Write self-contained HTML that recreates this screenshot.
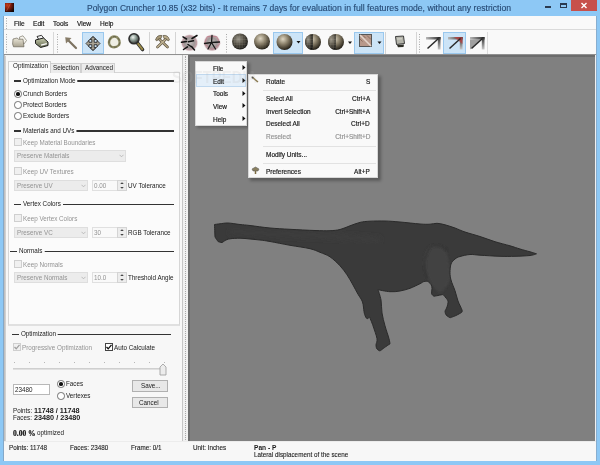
<!DOCTYPE html>
<html><head><meta charset="utf-8">
<style>
*{margin:0;padding:0;box-sizing:border-box}
html,body{width:600px;height:465px;overflow:hidden;background:#8dc8f5;font-family:"Liberation Sans",sans-serif;}
.a{position:absolute;white-space:nowrap;line-height:1}
.ti{top:3px;font-size:8.7px;color:#254872;line-height:normal;transform-origin:0 0;-webkit-text-stroke:0.12px currentColor}
#client{left:4px;top:16px;width:592px;height:445px;background:#f0f0f0;}
#menubar{left:4px;top:16px;width:592px;height:14px;background:#f9f9f9;border-bottom:1px solid #dadada}
#toolbar{left:4px;top:30px;width:592px;height:25px;background:#f9f9f9;border-bottom:1px solid #909090}
.mi{font-size:6.6px;color:#1a1a1a;line-height:normal;transform:scaleX(0.995);transform-origin:0 0;-webkit-text-stroke:0.18px currentColor}
#view{left:188px;top:55px;width:407px;height:386px;background:#808080;border-left:2px solid #6e6e6e;border-top:2px solid #6c6c6c}
#panel{left:4px;top:55px;width:179px;height:386px;background:#f2f2f2;border-right:1px solid #c6c6c6;border-left:1px solid #c0c0c0}
#status{left:4px;top:441px;width:592px;height:20px;background:#f7f7f7;border-top:1px solid #ececec}
.t{color:#1a1a1a}
.g{color:#939393}
.s{-webkit-text-stroke:0.12px currentColor;color:#222}
.m{-webkit-text-stroke:0.18px currentColor}
</style></head><body>
<div class="a" style="left:5px;top:3px;width:9px;height:9px;background:radial-gradient(circle at 25% 25%,#c83c18 0%,#7a1c0c 40%,#1a0806 80%,#05060a 100%)"></div><svg class="a" style="left:5px;top:3px" width="9" height="9"><path d="M5.5 0.5 L1.5 8" stroke="#ff9070" stroke-width="0.6" opacity="0.5"/></svg>
<div class="a ti" style="left:87px;transform:scaleX(0.974)">Polygon Cruncher 10.85 (x32 bits) - It remains 7 days for</div>
<div class="a ti" style="left:302px;transform:scaleX(1.005)">evaluation in full features</div>
<div class="a ti" style="left:401.2px;transform:scaleX(0.995)">mode, without any restriction</div>
<div class="a" style="left:545px;top:6px;width:6px;height:2px;background:#2a3a50"></div>
<div class="a" style="left:560px;top:3px;width:7px;height:5px;border:1px solid #2a3a50;border-top-width:2px"></div>
<div class="a" style="left:571px;top:0;width:26px;height:11px;background:#c7504b"></div>
<svg class="a" style="left:580px;top:2px" width="8" height="7" viewBox="0 0 8 7"><path d="M1.5 1 L6.5 6 M6.5 1 L1.5 6" stroke="#fff" stroke-width="1.4"/></svg>
<div class="a" id="client"></div>
<div class="a" style="left:3px;top:16px;width:1px;height:445px;background:#84a8c8"></div>
<div class="a" style="left:596px;top:16px;width:1px;height:445px;background:#88aed0"></div>
<div class="a" id="menubar"></div>
<div class="a mi" style="left:14px;top:20px">File</div>
<div class="a mi" style="left:33px;top:20px">Edit</div>
<div class="a mi" style="left:53px;top:20px">Tools</div>
<div class="a mi" style="left:77px;top:20px">View</div>
<div class="a mi" style="left:100px;top:20px">Help</div>
<div class="a" id="toolbar"></div>
<!-- toolbar -->
<svg class="a" style="left:0;top:0" width="600" height="60" viewBox="0 0 600 60">
<defs>
<radialGradient id="sph" cx="0.4" cy="0.32" r="0.72"><stop offset="0" stop-color="#ded6c2"/><stop offset="0.45" stop-color="#8a806a"/><stop offset="0.85" stop-color="#3a3428"/><stop offset="1" stop-color="#16140f"/></radialGradient>
<radialGradient id="sphd" cx="0.4" cy="0.35" r="0.7"><stop offset="0" stop-color="#9a968a"/><stop offset="0.5" stop-color="#4e4a40"/><stop offset="1" stop-color="#121210"/></radialGradient>
<pattern id="grid" width="2.6" height="2.6" patternUnits="userSpaceOnUse"><path d="M0 0 H2.6 M0 0 V2.6" stroke="#b8b0a0" stroke-width="0.5" opacity="0.55"/></pattern>
<linearGradient id="arwT" x1="0" y1="0" x2="1" y2="0"><stop offset="0" stop-color="#b8b8b8"/><stop offset="1" stop-color="#2a2a2a"/></linearGradient>
<linearGradient id="arwR" x1="0" y1="0" x2="0" y2="1"><stop offset="0" stop-color="#2a2a2a"/><stop offset="1" stop-color="#c8c8c8"/></linearGradient>
<radialGradient id="starbg" cx="0.5" cy="0.5" r="0.5"><stop offset="0" stop-color="#c8c2c2"/><stop offset="0.55" stop-color="#a09898"/><stop offset="0.82" stop-color="#c0a0a6"/><stop offset="1" stop-color="#f0e8ea" stop-opacity="0.2"/></radialGradient>
<linearGradient id="fold" x1="0" y1="0" x2="0" y2="1"><stop offset="0" stop-color="#ece8da"/><stop offset="1" stop-color="#a8a290"/></linearGradient>
<linearGradient id="prn" x1="0" y1="0" x2="0" y2="1"><stop offset="0" stop-color="#c8ccb0"/><stop offset="1" stop-color="#60664c"/></linearGradient>
<radialGradient id="lens" cx="0.4" cy="0.35" r="0.6"><stop offset="0" stop-color="#f0f4f0"/><stop offset="0.5" stop-color="#90a098"/><stop offset="1" stop-color="#404440"/></radialGradient>
</defs>
<!-- grips & separators -->
<line x1="6.5" y1="18" x2="6.5" y2="29" stroke="#a8a8a8" stroke-dasharray="1 1.5"/>
<line x1="6.5" y1="34" x2="6.5" y2="53" stroke="#a8a8a8" stroke-dasharray="1 1.5"/>
<line x1="53.5" y1="32" x2="53.5" y2="54" stroke="#d8d8d8"/>
<line x1="57.5" y1="34" x2="57.5" y2="53" stroke="#a8a8a8" stroke-dasharray="1 1.5"/>
<line x1="149.5" y1="32" x2="149.5" y2="54" stroke="#d4d4d4"/>
<line x1="175.5" y1="32" x2="175.5" y2="54" stroke="#d4d4d4"/>
<line x1="226.5" y1="34" x2="226.5" y2="53" stroke="#a8a8a8" stroke-dasharray="1 1.5"/>
<line x1="385.5" y1="32" x2="385.5" y2="54" stroke="#d4d4d4"/>
<line x1="416.5" y1="32" x2="416.5" y2="54" stroke="#d4d4d4"/>
<line x1="419.5" y1="34" x2="419.5" y2="53" stroke="#a8a8a8" stroke-dasharray="1 1.5"/>
<line x1="487.5" y1="32" x2="487.5" y2="54" stroke="#dcdcdc"/>
<!-- highlighted buttons -->
<rect x="82.5" y="32.5" width="21" height="21" fill="#cce4f7" stroke="#9ac8ee"/>
<rect x="273.5" y="32.5" width="29" height="21" fill="#cce4f7" stroke="#9ac8ee"/>
<rect x="354.5" y="32.5" width="29" height="21" fill="#cce4f7" stroke="#9ac8ee"/>
<rect x="443.5" y="32.5" width="22" height="21" fill="#cce4f7" stroke="#9ac8ee"/>
<!-- folder -->
<path d="M19.5 37 L23 35.8 L26.5 40.5 L24 44 L20 42 Z" fill="#f6f4ee" stroke="#6c6858" stroke-width="0.6"/>
<path d="M13 39 L17 38 L18.5 39.2 L23 39.2 L24 46.8 L13.5 46.8 L12.6 44 Z" fill="url(#fold)" stroke="#5a5648" stroke-width="0.6"/>
<!-- printer -->
<path d="M37 36.5 L41.5 35.3 L44 38.5 L39 39.8 Z" fill="#f4f4f4" stroke="#222" stroke-width="0.9"/>
<path d="M35.5 40 L43.5 38 L48 42 L48 45.5 L40.5 47.5 L35.5 43.5 Z" fill="url(#prn)" stroke="#1e1e1e" stroke-width="1"/>
<path d="M41 45.2 L46.8 43.6" stroke="#fafafa" stroke-width="1.4"/>
<!-- arrow -->
<path d="M67.5 39.5 L76 48" stroke="#7c7260" stroke-width="2.2" stroke-linecap="round"/>
<path d="M65.2 37.2 L71.5 38 L66 43.5 Z" fill="#877c68"/>
<!-- move (4-way) -->
<path d="M93 36.5 L96 39.5 L94.2 39.5 L94.2 42.3 L97 42.3 L97 40.5 L100 43.5 L97 46.5 L97 44.7 L94.2 44.7 L94.2 47.5 L96 47.5 L93 50.5 L90 47.5 L91.8 47.5 L91.8 44.7 L89 44.7 L89 46.5 L86 43.5 L89 40.5 L89 42.3 L91.8 42.3 L91.8 39.5 L90 39.5 Z" fill="#aaa494" stroke="#2e2e2e" stroke-width="0.9" stroke-linejoin="round"/>
<path d="M88 41 L93 36.5 L98 41 M88 46 L93 50.5 L98 46" fill="none" stroke="#3a3a3a" stroke-width="0.8"/>
<!-- rotate ring -->
<path d="M109.5 40 Q112 35 117 37.2 Q121 40.5 119 45 Q115.5 48.5 111 46.5 Q108 44 109.5 40 Z" fill="#eeeee4" stroke="#8c8a64" stroke-width="2.4"/>
<path d="M109.5 40 Q112 35 117 37.2 Q121 40.5 119 45 Q115.5 48.5 111 46.5 Q108 44 109.5 40 Z" fill="none" stroke="#4c4a38" stroke-width="0.6" stroke-dasharray="3 2"/>
<!-- magnifier -->
<path d="M137.5 43 L142.5 49.5" stroke="#2c2c2c" stroke-width="3.6" stroke-linecap="round"/>
<path d="M137.8 43.4 L142.2 49.1" stroke="#9a8a48" stroke-width="2" stroke-linecap="round"/>
<circle cx="134" cy="38.8" r="5" fill="url(#lens)" stroke="#2e2e2e" stroke-width="1.6"/>
<!-- hammer -->
<path d="M158 38 L167.5 47" stroke="#5a4e3c" stroke-width="2.6" stroke-linecap="round"/>
<path d="M167 38 L157.5 47" stroke="#5a4e3c" stroke-width="2.6" stroke-linecap="round"/>
<path d="M158 38 L167.5 47" stroke="#b4a888" stroke-width="1.4" stroke-linecap="round"/>
<path d="M167 38 L157.5 47" stroke="#c4b898" stroke-width="1.4" stroke-linecap="round"/>
<path d="M155.5 40 Q157 34.5 162 35.5 L161 38.5 Q158 38 157 41 Z" fill="#a89a78" stroke="#4c4436" stroke-width="0.6"/>
<path d="M169.5 40 Q168 34.5 163 35.5 L164 38.5 Q167 38 168 41 Z" fill="#b8aa88" stroke="#4c4436" stroke-width="0.6"/>
<!-- star blobs -->
<circle cx="189.5" cy="42.8" r="8.8" fill="url(#starbg)"/>
<path d="M183 36.8 L186.5 39 M192 38.5 L197 35.5 M181.5 42.3 L186.5 41.6 M188.5 41.8 L193.5 40.8 M188 44.5 L191 46.5 M183.5 49.5 L187.5 46.8 M191.5 46.5 L194.5 50" stroke="#111" stroke-width="1.5" stroke-linecap="round"/>
<circle cx="212" cy="42.8" r="8.8" fill="url(#starbg)"/>
<path d="M207 36.5 L217 36.5 L220 44 L212 49.5 L204.5 44 Z" fill="none" stroke="#c07080" stroke-width="0.7" opacity="0.7"/>
<path d="M212 35.5 L211.5 42.5 M204.5 43.5 L211.5 42.5 L219.5 42 M211.5 42.5 L208 49 M211.5 42.5 L215.5 49" stroke="#1a1a1a" stroke-width="1.3" fill="none" stroke-linecap="round"/>
<!-- spheres -->
<circle cx="240" cy="41.5" r="8" fill="url(#sphd)"/>
<circle cx="240" cy="41.5" r="7.6" fill="url(#grid)"/>
<circle cx="262" cy="41.5" r="8" fill="url(#sph)"/><circle cx="262" cy="41.5" r="7.6" fill="url(#grid)" opacity="0.35"/>
<circle cx="284.5" cy="42" r="8" fill="url(#sph)"/>
<path d="M296.5 41 H300.5 L298.5 43.5 Z" fill="#111"/>
<circle cx="313" cy="42" r="8" fill="url(#sph)"/>
<path d="M313 34 A8 8 0 0 0 313 50 Z" fill="url(#sphd)"/>
<path d="M313 34 A8 8 0 0 0 313 50 Z" fill="url(#grid)"/>
<circle cx="336" cy="42" r="8" fill="url(#sph)"/>
<path d="M336 34 A8 8 0 0 0 336 50 Z" fill="url(#sphd)" opacity="0.8"/>
<path d="M336 34 A8 8 0 0 0 336 50 Z" fill="url(#grid)"/>
<path d="M348 41.5 H352 L350 44 Z" fill="#111"/>
<!-- square -->
<rect x="359.5" y="34.5" width="12" height="12" fill="#b8988a" stroke="#4a4a4a" stroke-width="0.9"/>
<path d="M360 35 L371 46" stroke="#e4d4ca" stroke-width="1.6"/>
<path d="M363 35.5 L365.5 38 M367 35.5 L371 39.5 M360 39 L362.5 41.5" stroke="#6c5040" stroke-width="0.6"/>
<path d="M377.5 41.5 H381.5 L379.5 44 Z" fill="#111"/>
<!-- small icon -->
<path d="M395.5 36.5 L403.5 36 L404.5 43.5 L396.5 44.5 Z" fill="#b4b4aa" stroke="#2a2a2a" stroke-width="0.9"/>
<path d="M397 45 L404 44.5 L403.5 47 L398 47.2 Z" fill="#2e2e26"/>
<path d="M397 39 L402 38.8" stroke="#e0e0d8" stroke-width="0.8"/>
<!-- corner arrows -->
<g transform="translate(425,36)"><path d="M1 1 H15.5 V3.5 H1 Z" fill="url(#arwT)"/><path d="M12.8 1 H15.5 V13.5 H12.8 Z" fill="url(#arwR)"/><path d="M13.5 2.5 L2.5 12.5" stroke="#2a2a2a" stroke-width="1.5"/></g>
<g transform="translate(447,36)"><path d="M1 1 H15.5 V3.5 H1 Z" fill="url(#arwT)"/><path d="M12.8 1 H15.5 V13.5 H12.8 Z" fill="url(#arwR)"/><path d="M7 1 H15.5 V8 Z" fill="#c04040" opacity="0.7"/><path d="M13.5 2.5 L2.5 12.5" stroke="#2a2a2a" stroke-width="1.5"/></g>
<g transform="translate(469,36)"><path d="M1 3.5 H12.8 L1 13.5 Z" fill="#a0a0a0"/><path d="M1 1 H15.5 V3.5 H1 Z" fill="url(#arwT)"/><path d="M12.8 1 H15.5 V13.5 H12.8 Z" fill="url(#arwR)"/><path d="M13.5 2.5 L2.5 12.5" stroke="#2a2a2a" stroke-width="1.5"/></g>
</svg>

<div class="a" id="panel"></div>
<div class="a" id="view"></div>
<!-- panel content -->
<div class="a" style="left:5px;top:56px;width:177px;height:385px;background:#f7f7f7;border-left:1px solid #d0d0d0"></div>
<div class="a" style="left:8px;top:72px;width:172px;height:254px;background:#fbfbfb;border:1px solid #d6d6d6;border-bottom:2px solid #e0e0e0"></div>
<div class="a" style="left:50px;top:63px;width:31px;height:10px;background:#ececec;border:1px solid #d0d0d0;border-bottom:none"></div>
<div class="a" style="left:81px;top:63px;width:34px;height:10px;background:#ececec;border:1px solid #d0d0d0;border-bottom:none"></div>
<div class="a" style="left:8px;top:61px;width:43px;height:12px;background:#fbfbfb;border:1px solid #d0d0d0;border-bottom:none"></div>
<div class="a t " style="left:12.5px;top:62.27px;font-size:7.5px;transform:scaleX(0.84);transform-origin:0 0;">Optimization</div>
<div class="a t " style="left:53px;top:63.77px;font-size:7.5px;transform:scaleX(0.84);transform-origin:0 0;">Selection</div>
<div class="a t " style="left:85px;top:63.77px;font-size:7.5px;transform:scaleX(0.84);transform-origin:0 0;">Advanced</div>
<div class="a" style="left:14px;top:80.0px;width:160px;height:1.6px;background:#333"></div>
<div class="a t" style="left:21px;top:76.78px;font-size:7.5px;transform:scaleX(0.84);transform-origin:0 0;background:#fbfbfb;padding:0 2.4px 0 2.35px">Optimization Mode</div>
<div class="a" style="left:14px;top:90px;width:7.5px;height:7.5px;border-radius:50%;border:1px solid #707070;background:#fff"></div>
<div class="a" style="left:15.9px;top:91.9px;width:3.7px;height:3.7px;border-radius:50%;background:#111"></div>
<div class="a t " style="left:23px;top:89.78px;font-size:7.5px;transform:scaleX(0.84);transform-origin:0 0;">Crunch Borders</div>
<div class="a" style="left:14px;top:101px;width:7.5px;height:7.5px;border-radius:50%;border:1px solid #707070;background:#fff"></div>
<div class="a t " style="left:23px;top:100.78px;font-size:7.5px;transform:scaleX(0.84);transform-origin:0 0;">Protect Borders</div>
<div class="a" style="left:14px;top:112px;width:7.5px;height:7.5px;border-radius:50%;border:1px solid #707070;background:#fff"></div>
<div class="a t " style="left:23px;top:111.78px;font-size:7.5px;transform:scaleX(0.84);transform-origin:0 0;">Exclude Borders</div>
<div class="a" style="left:14px;top:130.0px;width:160px;height:1.6px;background:#333"></div>
<div class="a t" style="left:21px;top:126.78px;font-size:7.5px;transform:scaleX(0.84);transform-origin:0 0;background:#fbfbfb;padding:0 2.4px 0 2.35px">Materials and UVs</div>
<div class="a" style="left:14px;top:138px;width:8px;height:8px;border:1px solid #cfcfcf;background:#f0f0f0"></div>
<div class="a t g" style="left:23px;top:138.78px;font-size:7.5px;transform:scaleX(0.84);transform-origin:0 0;">Keep Material Boundaries</div>
<div class="a" style="left:14px;top:150px;width:112px;height:12px;background:#ececec;border:1px solid #dedede"></div>
<div class="a t g" style="left:17px;top:152.08px;font-size:7.5px;transform:scaleX(0.84);transform-origin:0 0;">Preserve Materials</div>
<svg class="a" style="left:119px;top:154px" width="5" height="4" viewBox="0 0 5 4"><path d="M0.5 0.8 L2.5 2.8 L4.5 0.8" stroke="#b0b0b0" stroke-width="0.8" fill="none"/></svg>
<div class="a" style="left:14px;top:167px;width:8px;height:8px;border:1px solid #cfcfcf;background:#f0f0f0"></div>
<div class="a t g" style="left:23px;top:167.78px;font-size:7.5px;transform:scaleX(0.84);transform-origin:0 0;">Keep UV Textures</div>
<div class="a" style="left:14px;top:180px;width:74px;height:11px;background:#ececec;border:1px solid #dedede"></div>
<div class="a t g" style="left:17px;top:182.08px;font-size:7.5px;transform:scaleX(0.84);transform-origin:0 0;">Preserve UV</div>
<svg class="a" style="left:81px;top:184px" width="5" height="4" viewBox="0 0 5 4"><path d="M0.5 0.8 L2.5 2.8 L4.5 0.8" stroke="#b0b0b0" stroke-width="0.8" fill="none"/></svg>
<div class="a" style="left:91.5px;top:180px;width:35.0px;height:11px;background:#f9f9f9;border:1px solid #e0e0e0"></div>
<div class="a" style="left:116.5px;top:180px;width:10px;height:11px;background:#ececec;border:1px solid #d4d4d4"></div>
<svg class="a" style="left:116.5px;top:180px" width="10" height="11" viewBox="0 0 10 11"><path d="M3.2 4 L5 2.2 L6.8 4 Z M3.2 7 L5 8.8 L6.8 7 Z" fill="#444"/></svg>
<div class="a t g" style="left:94.0px;top:182.08px;font-size:7.5px;transform:scaleX(0.84);transform-origin:0 0;">0.00</div>
<div class="a t " style="left:128px;top:181.78px;font-size:7.5px;transform:scaleX(0.84);transform-origin:0 0;">UV Tolerance</div>
<div class="a" style="left:14px;top:203.5px;width:160px;height:1.6px;background:#333"></div>
<div class="a t" style="left:21px;top:200.28px;font-size:7.5px;transform:scaleX(0.84);transform-origin:0 0;background:#fbfbfb;padding:0 2.4px 0 2.35px">Vertex Colors</div>
<div class="a" style="left:14px;top:214px;width:8px;height:8px;border:1px solid #cfcfcf;background:#f0f0f0"></div>
<div class="a t g" style="left:23px;top:214.78px;font-size:7.5px;transform:scaleX(0.84);transform-origin:0 0;">Keep Vertex Colors</div>
<div class="a" style="left:14px;top:227px;width:74px;height:11px;background:#ececec;border:1px solid #dedede"></div>
<div class="a t g" style="left:17px;top:229.08px;font-size:7.5px;transform:scaleX(0.84);transform-origin:0 0;">Preserve VC</div>
<svg class="a" style="left:81px;top:231px" width="5" height="4" viewBox="0 0 5 4"><path d="M0.5 0.8 L2.5 2.8 L4.5 0.8" stroke="#b0b0b0" stroke-width="0.8" fill="none"/></svg>
<div class="a" style="left:91.5px;top:227px;width:35.0px;height:11px;background:#f9f9f9;border:1px solid #e0e0e0"></div>
<div class="a" style="left:116.5px;top:227px;width:10px;height:11px;background:#ececec;border:1px solid #d4d4d4"></div>
<svg class="a" style="left:116.5px;top:227px" width="10" height="11" viewBox="0 0 10 11"><path d="M3.2 4 L5 2.2 L6.8 4 Z M3.2 7 L5 8.8 L6.8 7 Z" fill="#444"/></svg>
<div class="a t g" style="left:94.0px;top:229.08px;font-size:7.5px;transform:scaleX(0.84);transform-origin:0 0;">30</div>
<div class="a t " style="left:128px;top:228.78px;font-size:7.5px;transform:scaleX(0.84);transform-origin:0 0;">RGB Tolerance</div>
<div class="a" style="left:10px;top:250.5px;width:164px;height:1.6px;background:#333"></div>
<div class="a t" style="left:17px;top:247.28px;font-size:7.5px;transform:scaleX(0.84);transform-origin:0 0;background:#fbfbfb;padding:0 2.4px 0 2.35px">Normals</div>
<div class="a" style="left:14px;top:260px;width:8px;height:8px;border:1px solid #cfcfcf;background:#f0f0f0"></div>
<div class="a t g" style="left:23px;top:260.77px;font-size:7.5px;transform:scaleX(0.84);transform-origin:0 0;">Keep Normals</div>
<div class="a" style="left:14px;top:272px;width:74px;height:11px;background:#ececec;border:1px solid #dedede"></div>
<div class="a t g" style="left:17px;top:274.07px;font-size:7.5px;transform:scaleX(0.84);transform-origin:0 0;">Preserve Normals</div>
<svg class="a" style="left:81px;top:276px" width="5" height="4" viewBox="0 0 5 4"><path d="M0.5 0.8 L2.5 2.8 L4.5 0.8" stroke="#b0b0b0" stroke-width="0.8" fill="none"/></svg>
<div class="a" style="left:91.5px;top:272px;width:35.0px;height:11px;background:#f9f9f9;border:1px solid #e0e0e0"></div>
<div class="a" style="left:116.5px;top:272px;width:10px;height:11px;background:#ececec;border:1px solid #d4d4d4"></div>
<svg class="a" style="left:116.5px;top:272px" width="10" height="11" viewBox="0 0 10 11"><path d="M3.2 4 L5 2.2 L6.8 4 Z M3.2 7 L5 8.8 L6.8 7 Z" fill="#444"/></svg>
<div class="a t g" style="left:94.0px;top:274.07px;font-size:7.5px;transform:scaleX(0.84);transform-origin:0 0;">10.0</div>
<div class="a t " style="left:128px;top:273.77px;font-size:7.5px;transform:scaleX(0.84);transform-origin:0 0;">Threshold Angle</div>
<div class="a" style="left:12px;top:333.5px;width:159px;height:1.6px;background:#333"></div>
<div class="a t" style="left:19px;top:329.77px;font-size:7.5px;transform:scaleX(0.84);transform-origin:0 0;background:#f7f7f7;padding:0 2.4px 0 2.35px">Optimization</div>
<div class="a" style="left:13px;top:343px;width:8px;height:8px;border:1px solid #cfcfcf;background:#f0f0f0"></div>
<svg class="a" style="left:13px;top:343px" width="8" height="8" viewBox="0 0 8 8"><path d="M1.5 4 L3.2 5.8 L6.5 1.8" stroke="#a0a0a0" stroke-width="1.3" fill="none"/></svg>
<div class="a t g" style="left:22px;top:343.57px;font-size:7.5px;transform:scaleX(0.84);transform-origin:0 0;">Progressive Optimization</div>
<div class="a" style="left:105px;top:343px;width:8px;height:8px;border:1px solid #444;background:#fff"></div>
<svg class="a" style="left:105px;top:343px" width="8" height="8" viewBox="0 0 8 8"><path d="M1.5 4 L3.2 5.8 L6.5 1.8" stroke="#111" stroke-width="1.3" fill="none"/></svg>
<div class="a t " style="left:114px;top:343.57px;font-size:7.5px;transform:scaleX(0.84);transform-origin:0 0;">Auto Calculate</div>
<div class="a" style="left:14px;top:362px;width:1px;height:1px;background:#b8b8b8"></div>
<div class="a" style="left:29px;top:362px;width:1px;height:1px;background:#b8b8b8"></div>
<div class="a" style="left:44px;top:362px;width:1px;height:1px;background:#b8b8b8"></div>
<div class="a" style="left:59px;top:362px;width:1px;height:1px;background:#b8b8b8"></div>
<div class="a" style="left:74px;top:362px;width:1px;height:1px;background:#b8b8b8"></div>
<div class="a" style="left:89px;top:362px;width:1px;height:1px;background:#b8b8b8"></div>
<div class="a" style="left:104px;top:362px;width:1px;height:1px;background:#b8b8b8"></div>
<div class="a" style="left:119px;top:362px;width:1px;height:1px;background:#b8b8b8"></div>
<div class="a" style="left:134px;top:362px;width:1px;height:1px;background:#b8b8b8"></div>
<div class="a" style="left:149px;top:362px;width:1px;height:1px;background:#b8b8b8"></div>
<div class="a" style="left:164px;top:362px;width:1px;height:1px;background:#b8b8b8"></div>
<div class="a" style="left:13px;top:368px;width:152px;height:2px;background:#e0e0e0;border-top:1px solid #cfcfcf"></div>
<svg class="a" style="left:159px;top:363px" width="8" height="13" viewBox="0 0 8 13"><path d="M1 12 V4 L4 1 L7 4 V12 Z" fill="#ececec" stroke="#9a9a9a" stroke-width="0.8"/></svg>
<div class="a" style="left:13px;top:384px;width:37px;height:11px;background:#fff;border:1px solid #b8b8b8"></div>
<div class="a t " style="left:15px;top:385.77px;font-size:7.5px;transform:scaleX(0.84);transform-origin:0 0;">23480</div>
<div class="a" style="left:57px;top:380px;width:7.5px;height:7.5px;border-radius:50%;border:1px solid #707070;background:#fff"></div>
<div class="a" style="left:58.9px;top:381.9px;width:3.7px;height:3.7px;border-radius:50%;background:#111"></div>
<div class="a t " style="left:66px;top:379.77px;font-size:7.5px;transform:scaleX(0.84);transform-origin:0 0;">Faces</div>
<div class="a" style="left:57px;top:392px;width:7.5px;height:7.5px;border-radius:50%;border:1px solid #707070;background:#fff"></div>
<div class="a t " style="left:66px;top:391.77px;font-size:7.5px;transform:scaleX(0.84);transform-origin:0 0;">Vertexes</div>
<div class="a" style="left:132px;top:380px;width:36px;height:12px;background:#e8e8e8;border:1px solid #b0b0b0"></div>
<div class="a t " style="left:141px;top:382.27px;font-size:7.5px;transform:scaleX(0.84);transform-origin:0 0;">Save...</div>
<div class="a" style="left:132px;top:397px;width:36px;height:11px;background:#e8e8e8;border:1px solid #b0b0b0"></div>
<div class="a t " style="left:139px;top:398.77px;font-size:7.5px;transform:scaleX(0.84);transform-origin:0 0;">Cancel</div>
<div class="a t " style="left:13px;top:407.07px;font-size:7.5px;transform:scaleX(0.84);transform-origin:0 0;">Points:</div>
<div class="a t " style="left:34px;top:407.16px;font-size:7.4px;transform:scaleX(0.98);transform-origin:0 0;"><b>11748 / 11748</b></div>
<div class="a t " style="left:13px;top:414.38px;font-size:7.5px;transform:scaleX(0.84);transform-origin:0 0;">Faces:</div>
<div class="a t " style="left:34px;top:413.86px;font-size:7.4px;transform:scaleX(0.98);transform-origin:0 0;"><b>23480 / 23480</b></div>
<div class="a t " style="left:13px;top:430.39px;font-size:8.2px;transform:scaleX(0.92);transform-origin:0 0;font-family:'Liberation Serif',serif;color:#111;-webkit-text-stroke:0.2px #111"><b>0.00 %</b></div>
<div class="a t " style="left:37px;top:429.07px;font-size:7.5px;transform:scaleX(0.84);transform-origin:0 0;">optimized</div>
<div class="a" style="left:185px;top:56px;width:1px;height:384px;border-left:1px dotted #a8a8a8"></div>
<div class="a" id="status"></div>
<div class="a t s" style="left:9px;top:444.38px;font-size:7.5px;transform:scaleX(0.84);transform-origin:0 0;">Points: 11748</div>
<div class="a t s" style="left:70px;top:444.38px;font-size:7.5px;transform:scaleX(0.84);transform-origin:0 0;">Faces: 23480</div>
<div class="a t s" style="left:131px;top:444.38px;font-size:7.5px;transform:scaleX(0.84);transform-origin:0 0;">Frame: 0/1</div>
<div class="a t s" style="left:193px;top:444.38px;font-size:7.5px;transform:scaleX(0.84);transform-origin:0 0;">Unit: Inches</div>
<div class="a t " style="left:254px;top:444.07px;font-size:7.5px;transform:scaleX(0.88);transform-origin:0 0;"><b>Pan - P</b></div>
<div class="a t s" style="left:254px;top:450.77px;font-size:7.5px;transform:scaleX(0.84);transform-origin:0 0;">Lateral displacement of the scene</div>
<!-- dinosaur -->
<svg class="a" style="left:0;top:0" width="600" height="465" viewBox="0 0 600 465">
<defs>
<clipPath id="dclip"><path d="M214.5 224.5 C214.5 224.5 217.8 224.1 220.0 223.8 C222.2 223.6 224.7 222.9 228.0 223.0 C231.3 223.1 236.3 224.1 240.0 224.5 C243.7 224.9 245.0 224.9 250.0 225.5 C255.0 226.1 263.3 227.4 270.0 228.0 C276.7 228.6 282.5 228.9 290.0 229.3 C297.5 229.7 308.3 230.3 315.0 230.5 C321.7 230.7 325.8 230.9 330.0 230.7 C334.2 230.5 336.7 230.3 340.0 229.5 C343.3 228.7 346.7 227.0 350.0 225.8 C353.3 224.6 356.7 223.2 360.0 222.4 C363.3 221.6 365.8 221.4 370.0 221.2 C374.2 221.0 380.0 220.9 385.0 221.0 C390.0 221.1 394.2 221.5 400.0 222.0 C405.8 222.5 415.0 223.6 420.0 224.0 C425.0 224.4 427.2 224.3 430.0 224.2 C432.8 224.1 434.5 223.2 437.0 223.3 C439.5 223.4 442.0 224.0 445.0 224.8 C448.0 225.6 451.7 226.8 455.0 228.0 C458.3 229.2 460.8 230.6 465.0 232.0 C469.2 233.4 475.0 234.9 480.0 236.5 C485.0 238.1 490.0 240.1 495.0 241.7 C500.0 243.2 505.8 244.6 510.0 245.8 C514.2 247.0 516.7 248.0 520.0 249.0 C523.3 250.0 527.2 251.0 530.0 251.8 C532.8 252.6 536.5 253.8 536.5 253.8 C536.5 253.8 533.6 255.1 530.0 255.5 C526.4 255.9 520.0 256.2 515.0 256.3 C510.0 256.4 505.8 256.5 500.0 256.3 C494.2 256.1 485.0 255.5 480.0 255.2 C475.0 254.9 473.3 254.3 470.0 254.5 C466.7 254.7 462.5 255.8 460.0 256.5 C457.5 257.2 456.5 257.8 455.0 259.0 C453.5 260.2 451.8 261.7 451.0 264.0 C450.2 266.3 450.0 269.9 450.0 272.6 C450.0 275.3 450.2 277.0 451.0 280.0 C451.8 283.0 453.8 287.2 455.0 290.7 C456.2 294.2 456.8 297.8 458.0 301.0 C459.2 304.2 461.4 308.1 462.0 310.0 C462.6 311.9 461.5 312.5 461.5 312.5 C461.5 312.5 457.9 314.6 456.0 315.5 C454.1 316.4 450.0 317.8 450.0 317.8 C450.0 317.8 446.8 315.9 446.0 314.8 C445.2 313.7 445.0 311.0 445.0 311.0 C445.0 311.0 446.5 308.4 447.0 307.0 C447.5 305.6 447.9 303.9 448.0 302.7 C448.1 301.5 448.1 301.1 447.3 299.7 C446.5 298.3 443.0 294.5 443.0 294.5 C443.0 294.5 439.5 295.2 438.0 295.5 C436.5 295.8 434.0 296.3 434.0 296.3 C434.0 296.3 431.9 295.0 431.6 293.7 C431.3 292.4 432.1 289.8 432.0 288.3 C431.9 286.8 431.7 285.6 431.0 284.5 C430.3 283.4 428.0 281.5 428.0 281.5 C428.0 281.5 425.3 281.1 424.0 281.5 C422.7 281.9 422.3 282.6 420.0 283.7 C417.7 284.8 413.3 287.1 410.0 288.3 C406.7 289.5 403.3 290.4 400.0 291.0 C396.7 291.6 393.7 291.9 390.0 291.7 C386.3 291.5 378.0 289.7 378.0 289.7 C378.0 289.7 380.3 296.1 381.0 300.0 C381.7 303.9 381.3 308.7 382.0 313.0 C382.7 317.3 383.8 321.5 385.0 325.8 C386.2 330.1 388.2 335.7 389.0 338.7 C389.8 341.7 390.0 343.9 390.0 343.9 C390.0 343.9 387.7 345.3 386.0 346.5 C384.3 347.7 380.0 351.0 380.0 351.0 C380.0 351.0 377.7 350.0 377.0 349.0 C376.3 348.0 376.0 346.7 376.0 345.0 C376.0 343.3 377.5 341.9 377.0 338.7 C376.5 335.5 374.2 329.4 373.0 325.8 C371.8 322.2 369.5 317.0 369.5 317.0 C369.5 317.0 367.8 318.9 367.0 318.7 C366.2 318.4 365.0 315.5 365.0 315.5 C365.0 315.5 364.4 313.9 364.0 311.6 C363.6 309.4 363.5 304.9 362.5 302.0 C361.5 299.1 359.6 297.0 358.0 294.2 C356.4 291.4 354.8 288.2 353.0 285.0 C351.2 281.8 349.2 278.0 347.0 274.8 C344.8 271.6 342.8 268.8 340.0 265.8 C337.2 262.8 333.3 259.1 330.0 256.8 C326.7 254.6 323.3 253.7 320.0 252.3 C316.7 251.0 315.0 249.9 310.0 248.7 C305.0 247.5 296.7 246.5 290.0 245.3 C283.3 244.1 275.0 242.4 270.0 241.5 C265.0 240.6 263.3 240.4 260.0 240.0 C256.7 239.6 253.3 239.3 250.0 239.0 C246.7 238.7 243.3 238.2 240.0 238.2 C236.7 238.2 232.5 238.4 230.0 238.8 C227.5 239.2 226.3 239.9 225.0 240.5 C223.7 241.1 223.2 242.3 222.0 242.5 C220.8 242.7 218.0 241.5 218.0 241.5 C218.0 241.5 215.0 237.0 215.0 237.0 C215.0 237.0 214.5 224.5 214.5 224.5Z"/></clipPath>
<filter id="bl" x="-50%" y="-50%" width="200%" height="200%"><feGaussianBlur stdDeviation="2.5"/></filter>
<filter id="bl1" x="-50%" y="-50%" width="200%" height="200%"><feGaussianBlur stdDeviation="1.2"/></filter>
</defs>
<path fill="#3a3a3a" d="M214.5 224.5 C214.5 224.5 217.8 224.1 220.0 223.8 C222.2 223.6 224.7 222.9 228.0 223.0 C231.3 223.1 236.3 224.1 240.0 224.5 C243.7 224.9 245.0 224.9 250.0 225.5 C255.0 226.1 263.3 227.4 270.0 228.0 C276.7 228.6 282.5 228.9 290.0 229.3 C297.5 229.7 308.3 230.3 315.0 230.5 C321.7 230.7 325.8 230.9 330.0 230.7 C334.2 230.5 336.7 230.3 340.0 229.5 C343.3 228.7 346.7 227.0 350.0 225.8 C353.3 224.6 356.7 223.2 360.0 222.4 C363.3 221.6 365.8 221.4 370.0 221.2 C374.2 221.0 380.0 220.9 385.0 221.0 C390.0 221.1 394.2 221.5 400.0 222.0 C405.8 222.5 415.0 223.6 420.0 224.0 C425.0 224.4 427.2 224.3 430.0 224.2 C432.8 224.1 434.5 223.2 437.0 223.3 C439.5 223.4 442.0 224.0 445.0 224.8 C448.0 225.6 451.7 226.8 455.0 228.0 C458.3 229.2 460.8 230.6 465.0 232.0 C469.2 233.4 475.0 234.9 480.0 236.5 C485.0 238.1 490.0 240.1 495.0 241.7 C500.0 243.2 505.8 244.6 510.0 245.8 C514.2 247.0 516.7 248.0 520.0 249.0 C523.3 250.0 527.2 251.0 530.0 251.8 C532.8 252.6 536.5 253.8 536.5 253.8 C536.5 253.8 533.6 255.1 530.0 255.5 C526.4 255.9 520.0 256.2 515.0 256.3 C510.0 256.4 505.8 256.5 500.0 256.3 C494.2 256.1 485.0 255.5 480.0 255.2 C475.0 254.9 473.3 254.3 470.0 254.5 C466.7 254.7 462.5 255.8 460.0 256.5 C457.5 257.2 456.5 257.8 455.0 259.0 C453.5 260.2 451.8 261.7 451.0 264.0 C450.2 266.3 450.0 269.9 450.0 272.6 C450.0 275.3 450.2 277.0 451.0 280.0 C451.8 283.0 453.8 287.2 455.0 290.7 C456.2 294.2 456.8 297.8 458.0 301.0 C459.2 304.2 461.4 308.1 462.0 310.0 C462.6 311.9 461.5 312.5 461.5 312.5 C461.5 312.5 457.9 314.6 456.0 315.5 C454.1 316.4 450.0 317.8 450.0 317.8 C450.0 317.8 446.8 315.9 446.0 314.8 C445.2 313.7 445.0 311.0 445.0 311.0 C445.0 311.0 446.5 308.4 447.0 307.0 C447.5 305.6 447.9 303.9 448.0 302.7 C448.1 301.5 448.1 301.1 447.3 299.7 C446.5 298.3 443.0 294.5 443.0 294.5 C443.0 294.5 439.5 295.2 438.0 295.5 C436.5 295.8 434.0 296.3 434.0 296.3 C434.0 296.3 431.9 295.0 431.6 293.7 C431.3 292.4 432.1 289.8 432.0 288.3 C431.9 286.8 431.7 285.6 431.0 284.5 C430.3 283.4 428.0 281.5 428.0 281.5 C428.0 281.5 425.3 281.1 424.0 281.5 C422.7 281.9 422.3 282.6 420.0 283.7 C417.7 284.8 413.3 287.1 410.0 288.3 C406.7 289.5 403.3 290.4 400.0 291.0 C396.7 291.6 393.7 291.9 390.0 291.7 C386.3 291.5 378.0 289.7 378.0 289.7 C378.0 289.7 380.3 296.1 381.0 300.0 C381.7 303.9 381.3 308.7 382.0 313.0 C382.7 317.3 383.8 321.5 385.0 325.8 C386.2 330.1 388.2 335.7 389.0 338.7 C389.8 341.7 390.0 343.9 390.0 343.9 C390.0 343.9 387.7 345.3 386.0 346.5 C384.3 347.7 380.0 351.0 380.0 351.0 C380.0 351.0 377.7 350.0 377.0 349.0 C376.3 348.0 376.0 346.7 376.0 345.0 C376.0 343.3 377.5 341.9 377.0 338.7 C376.5 335.5 374.2 329.4 373.0 325.8 C371.8 322.2 369.5 317.0 369.5 317.0 C369.5 317.0 367.8 318.9 367.0 318.7 C366.2 318.4 365.0 315.5 365.0 315.5 C365.0 315.5 364.4 313.9 364.0 311.6 C363.6 309.4 363.5 304.9 362.5 302.0 C361.5 299.1 359.6 297.0 358.0 294.2 C356.4 291.4 354.8 288.2 353.0 285.0 C351.2 281.8 349.2 278.0 347.0 274.8 C344.8 271.6 342.8 268.8 340.0 265.8 C337.2 262.8 333.3 259.1 330.0 256.8 C326.7 254.6 323.3 253.7 320.0 252.3 C316.7 251.0 315.0 249.9 310.0 248.7 C305.0 247.5 296.7 246.5 290.0 245.3 C283.3 244.1 275.0 242.4 270.0 241.5 C265.0 240.6 263.3 240.4 260.0 240.0 C256.7 239.6 253.3 239.3 250.0 239.0 C246.7 238.7 243.3 238.2 240.0 238.2 C236.7 238.2 232.5 238.4 230.0 238.8 C227.5 239.2 226.3 239.9 225.0 240.5 C223.7 241.1 223.2 242.3 222.0 242.5 C220.8 242.7 218.0 241.5 218.0 241.5 C218.0 241.5 215.0 237.0 215.0 237.0 C215.0 237.0 214.5 224.5 214.5 224.5Z"/>
<g clip-path="url(#dclip)">
<path d="M424 262 Q424 246 434 245.5 Q446 246 448 258 L451 276 Q447 290 440 293 Q428 286 424 262 Z" fill="#424242" filter="url(#bl1)"/>
<path d="M427 279 Q421 258 431 246.5 Q440 243.5 447 250" fill="none" stroke="#333" stroke-width="1.3" filter="url(#bl1)"/>
<path d="M230 232 L330 236 L380 240" fill="none" stroke="#3c3c3c" stroke-width="5" filter="url(#bl)"/>
</g>
<path fill="none" stroke="#2a2a2a" stroke-width="1" d="M214.5 224.5 C214.5 224.5 217.8 224.1 220.0 223.8 C222.2 223.6 224.7 222.9 228.0 223.0 C231.3 223.1 236.3 224.1 240.0 224.5 C243.7 224.9 245.0 224.9 250.0 225.5 C255.0 226.1 263.3 227.4 270.0 228.0 C276.7 228.6 282.5 228.9 290.0 229.3 C297.5 229.7 308.3 230.3 315.0 230.5 C321.7 230.7 325.8 230.9 330.0 230.7 C334.2 230.5 336.7 230.3 340.0 229.5 C343.3 228.7 346.7 227.0 350.0 225.8 C353.3 224.6 356.7 223.2 360.0 222.4 C363.3 221.6 365.8 221.4 370.0 221.2 C374.2 221.0 380.0 220.9 385.0 221.0 C390.0 221.1 394.2 221.5 400.0 222.0 C405.8 222.5 415.0 223.6 420.0 224.0 C425.0 224.4 427.2 224.3 430.0 224.2 C432.8 224.1 434.5 223.2 437.0 223.3 C439.5 223.4 442.0 224.0 445.0 224.8 C448.0 225.6 451.7 226.8 455.0 228.0 C458.3 229.2 460.8 230.6 465.0 232.0 C469.2 233.4 475.0 234.9 480.0 236.5 C485.0 238.1 490.0 240.1 495.0 241.7 C500.0 243.2 505.8 244.6 510.0 245.8 C514.2 247.0 516.7 248.0 520.0 249.0 C523.3 250.0 527.2 251.0 530.0 251.8 C532.8 252.6 536.5 253.8 536.5 253.8 C536.5 253.8 533.6 255.1 530.0 255.5 C526.4 255.9 520.0 256.2 515.0 256.3 C510.0 256.4 505.8 256.5 500.0 256.3 C494.2 256.1 485.0 255.5 480.0 255.2 C475.0 254.9 473.3 254.3 470.0 254.5 C466.7 254.7 462.5 255.8 460.0 256.5 C457.5 257.2 456.5 257.8 455.0 259.0 C453.5 260.2 451.8 261.7 451.0 264.0 C450.2 266.3 450.0 269.9 450.0 272.6 C450.0 275.3 450.2 277.0 451.0 280.0 C451.8 283.0 453.8 287.2 455.0 290.7 C456.2 294.2 456.8 297.8 458.0 301.0 C459.2 304.2 461.4 308.1 462.0 310.0 C462.6 311.9 461.5 312.5 461.5 312.5 C461.5 312.5 457.9 314.6 456.0 315.5 C454.1 316.4 450.0 317.8 450.0 317.8 C450.0 317.8 446.8 315.9 446.0 314.8 C445.2 313.7 445.0 311.0 445.0 311.0 C445.0 311.0 446.5 308.4 447.0 307.0 C447.5 305.6 447.9 303.9 448.0 302.7 C448.1 301.5 448.1 301.1 447.3 299.7 C446.5 298.3 443.0 294.5 443.0 294.5 C443.0 294.5 439.5 295.2 438.0 295.5 C436.5 295.8 434.0 296.3 434.0 296.3 C434.0 296.3 431.9 295.0 431.6 293.7 C431.3 292.4 432.1 289.8 432.0 288.3 C431.9 286.8 431.7 285.6 431.0 284.5 C430.3 283.4 428.0 281.5 428.0 281.5 C428.0 281.5 425.3 281.1 424.0 281.5 C422.7 281.9 422.3 282.6 420.0 283.7 C417.7 284.8 413.3 287.1 410.0 288.3 C406.7 289.5 403.3 290.4 400.0 291.0 C396.7 291.6 393.7 291.9 390.0 291.7 C386.3 291.5 378.0 289.7 378.0 289.7 C378.0 289.7 380.3 296.1 381.0 300.0 C381.7 303.9 381.3 308.7 382.0 313.0 C382.7 317.3 383.8 321.5 385.0 325.8 C386.2 330.1 388.2 335.7 389.0 338.7 C389.8 341.7 390.0 343.9 390.0 343.9 C390.0 343.9 387.7 345.3 386.0 346.5 C384.3 347.7 380.0 351.0 380.0 351.0 C380.0 351.0 377.7 350.0 377.0 349.0 C376.3 348.0 376.0 346.7 376.0 345.0 C376.0 343.3 377.5 341.9 377.0 338.7 C376.5 335.5 374.2 329.4 373.0 325.8 C371.8 322.2 369.5 317.0 369.5 317.0 C369.5 317.0 367.8 318.9 367.0 318.7 C366.2 318.4 365.0 315.5 365.0 315.5 C365.0 315.5 364.4 313.9 364.0 311.6 C363.6 309.4 363.5 304.9 362.5 302.0 C361.5 299.1 359.6 297.0 358.0 294.2 C356.4 291.4 354.8 288.2 353.0 285.0 C351.2 281.8 349.2 278.0 347.0 274.8 C344.8 271.6 342.8 268.8 340.0 265.8 C337.2 262.8 333.3 259.1 330.0 256.8 C326.7 254.6 323.3 253.7 320.0 252.3 C316.7 251.0 315.0 249.9 310.0 248.7 C305.0 247.5 296.7 246.5 290.0 245.3 C283.3 244.1 275.0 242.4 270.0 241.5 C265.0 240.6 263.3 240.4 260.0 240.0 C256.7 239.6 253.3 239.3 250.0 239.0 C246.7 238.7 243.3 238.2 240.0 238.2 C236.7 238.2 232.5 238.4 230.0 238.8 C227.5 239.2 226.3 239.9 225.0 240.5 C223.7 241.1 223.2 242.3 222.0 242.5 C220.8 242.7 218.0 241.5 218.0 241.5 C218.0 241.5 215.0 237.0 215.0 237.0 C215.0 237.0 214.5 224.5 214.5 224.5Z"/>
</svg>

<!-- menus -->
<div class="a" style="left:197px;top:63px;width:53px;height:65px;background:rgba(0,0,0,0.25);filter:blur(1.5px)"></div>
<div class="a" style="left:195px;top:61px;width:52px;height:65px;background:#f9f9f9;border:1px solid #d8d8d8"></div>
<div class="a" style="left:196px;top:74px;width:50px;height:13px;background:#e4eff9;border:1px solid #c0d8ee"></div>
<div class="a t m" style="left:213px;top:65.61px;font-size:6.5px;transform:scaleX(0.995);transform-origin:0 0;">File</div>
<svg class="a" style="left:242px;top:65px" width="4" height="5" viewBox="0 0 4 5"><path d="M0.5 0 L3.5 2.5 L0.5 5 Z" fill="#111"/></svg>
<div class="a t m" style="left:213px;top:78.61px;font-size:6.5px;transform:scaleX(0.995);transform-origin:0 0;">Edit</div>
<svg class="a" style="left:242px;top:78px" width="4" height="5" viewBox="0 0 4 5"><path d="M0.5 0 L3.5 2.5 L0.5 5 Z" fill="#111"/></svg>
<div class="a t m" style="left:213px;top:91.11px;font-size:6.5px;transform:scaleX(0.995);transform-origin:0 0;">Tools</div>
<svg class="a" style="left:242px;top:90.5px" width="4" height="5" viewBox="0 0 4 5"><path d="M0.5 0 L3.5 2.5 L0.5 5 Z" fill="#111"/></svg>
<div class="a t m" style="left:213px;top:103.61px;font-size:6.5px;transform:scaleX(0.995);transform-origin:0 0;">View</div>
<svg class="a" style="left:242px;top:103px" width="4" height="5" viewBox="0 0 4 5"><path d="M0.5 0 L3.5 2.5 L0.5 5 Z" fill="#111"/></svg>
<div class="a t m" style="left:213px;top:116.61px;font-size:6.5px;transform:scaleX(0.995);transform-origin:0 0;">Help</div>
<svg class="a" style="left:242px;top:116px" width="4" height="5" viewBox="0 0 4 5"><path d="M0.5 0 L3.5 2.5 L0.5 5 Z" fill="#111"/></svg>
<div class="a" style="left:250px;top:76px;width:131px;height:105px;background:rgba(0,0,0,0.28);filter:blur(1.5px)"></div>
<div class="a" style="left:248px;top:74px;width:130px;height:104px;background:#f9f9f9;border:1px solid #d8d8d8"></div>
<div class="a" style="left:263px;top:89.5px;width:113px;height:1px;background:#e2e2e2"></div>
<div class="a" style="left:263px;top:146px;width:113px;height:1px;background:#e2e2e2"></div>
<div class="a" style="left:263px;top:163px;width:113px;height:1px;background:#e2e2e2"></div>
<div class="a t m" style="left:266px;top:78.51px;font-size:6.5px;transform:scaleX(0.995);transform-origin:0 0;">Rotate</div>
<div class="a t m" style="right:230px;top:78.51px;font-size:6.5px;transform:scaleX(0.995);transform-origin:100% 0;">S</div>
<div class="a t m" style="left:266px;top:96.01px;font-size:6.5px;transform:scaleX(0.995);transform-origin:0 0;">Select All</div>
<div class="a t m" style="right:230px;top:96.01px;font-size:6.5px;transform:scaleX(0.995);transform-origin:100% 0;">Ctrl+A</div>
<div class="a t m" style="left:266px;top:108.51px;font-size:6.5px;transform:scaleX(0.995);transform-origin:0 0;">Invert Selection</div>
<div class="a t m" style="right:230px;top:108.51px;font-size:6.5px;transform:scaleX(0.995);transform-origin:100% 0;">Ctrl+Shift+A</div>
<div class="a t m" style="left:266px;top:121.01px;font-size:6.5px;transform:scaleX(0.995);transform-origin:0 0;">Deselect All</div>
<div class="a t m" style="right:230px;top:121.01px;font-size:6.5px;transform:scaleX(0.995);transform-origin:100% 0;">Ctrl+D</div>
<div class="a t m g" style="left:266px;top:133.50px;font-size:6.5px;transform:scaleX(0.995);transform-origin:0 0;">Reselect</div>
<div class="a t m g" style="right:230px;top:133.50px;font-size:6.5px;transform:scaleX(0.995);transform-origin:100% 0;">Ctrl+Shift+D</div>
<div class="a t m" style="left:266px;top:152.00px;font-size:6.5px;transform:scaleX(0.995);transform-origin:0 0;">Modify Units...</div>
<div class="a t m" style="left:266px;top:168.50px;font-size:6.5px;transform:scaleX(0.995);transform-origin:0 0;">Preferences</div>
<div class="a t m" style="right:230px;top:168.50px;font-size:6.5px;transform:scaleX(0.995);transform-origin:100% 0;">Alt+P</div>
<svg class="a" style="left:251px;top:76px" width="9" height="8" viewBox="0 0 9 8"><path d="M1 1 L7 6" stroke="#8a7a50" stroke-width="1.5"/><path d="M0.5 0.5 L3 1 L1 3 Z" fill="#555"/></svg>
<svg class="a" style="left:251px;top:166px" width="9" height="9" viewBox="0 0 9 9"><path d="M1 3 L4.5 1 L8 3 L7 5 L2 5 Z" fill="#8a8060" stroke="#555" stroke-width="0.5"/><path d="M4.5 5 V8" stroke="#7a6a40" stroke-width="1.5"/></svg>
<div class="a" style="left:172px;top:69px;font-size:16.5px;font-weight:bold;color:rgba(175,175,175,0.15);letter-spacing:0.3px;transform:scaleX(0.88);transform-origin:0 0;line-height:1">SOFTPEDIA</div>
</body></html>
